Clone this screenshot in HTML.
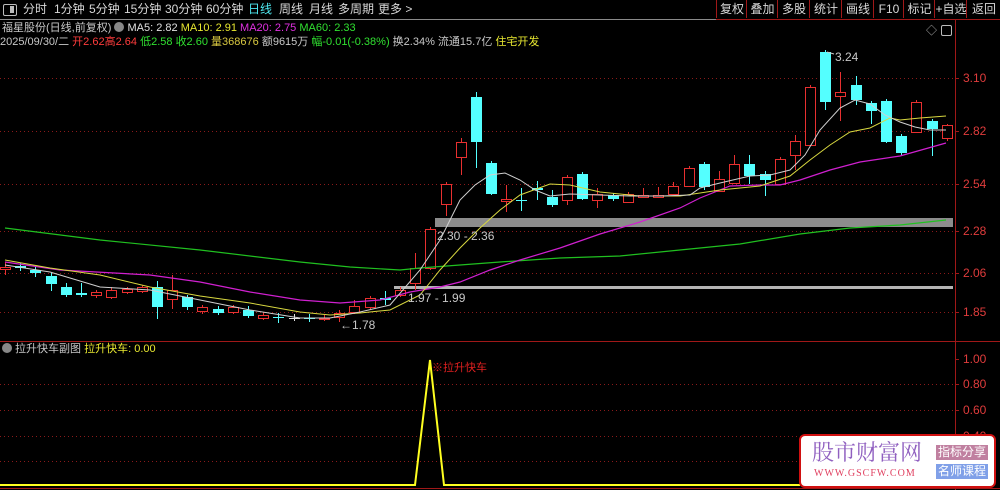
<!DOCTYPE html>
<html><head><meta charset="utf-8"><style>
html,body{margin:0;padding:0;background:#000;width:1000px;height:490px;overflow:hidden}
body{font-family:"Liberation Sans","Noto Sans CJK SC",sans-serif;font-size:12px;color:#c8c8c8;position:relative}
.a{position:absolute;white-space:nowrap;line-height:14px}
.s{font-size:11px}
.tb{position:absolute;top:0;height:19px;line-height:19px;font-size:12px}
.btn{position:absolute;top:0;height:18px;line-height:18px;border-left:1px solid #a01818;text-align:center;color:#d8d8d8;font-size:12px}
</style></head><body>
<svg width="1000" height="490" style="position:absolute;left:0;top:0" id="s">
<line x1="0" y1="19.5" x2="1000" y2="19.5" stroke="#8a8a8a"/>
<line x1="716" y1="19.5" x2="1000" y2="19.5" stroke="#a01818"/>
<line x1="955.5" y1="20" x2="955.5" y2="490" stroke="#a01818"/>
<line x1="0" y1="341.5" x2="1000" y2="341.5" stroke="#a01818"/>
<line x1="0" y1="488.5" x2="1000" y2="488.5" stroke="#a01818"/>
<g stroke="#8a1a1a" stroke-dasharray="1,3">
<line x1="0" y1="78.5" x2="955" y2="78.5"/><line x1="0" y1="131.5" x2="955" y2="131.5"/>
<line x1="0" y1="184.5" x2="955" y2="184.5"/><line x1="0" y1="231.5" x2="955" y2="231.5"/>
<line x1="0" y1="273.5" x2="955" y2="273.5"/><line x1="0" y1="312.5" x2="955" y2="312.5"/>
<line x1="0" y1="384.5" x2="955" y2="384.5"/><line x1="0" y1="410.5" x2="955" y2="410.5"/>
<line x1="0" y1="436.5" x2="955" y2="436.5"/><line x1="0" y1="461.5" x2="955" y2="461.5"/>
</g>
<g stroke="#a01818">
<line x1="955" y1="78.5" x2="959" y2="78.5"/><line x1="955" y1="131.5" x2="959" y2="131.5"/><line x1="955" y1="184.5" x2="959" y2="184.5"/><line x1="955" y1="231.5" x2="959" y2="231.5"/><line x1="955" y1="273.5" x2="959" y2="273.5"/><line x1="955" y1="312.5" x2="959" y2="312.5"/>
<line x1="955" y1="359.5" x2="959" y2="359.5"/><line x1="955" y1="384.5" x2="959" y2="384.5"/><line x1="955" y1="410.5" x2="959" y2="410.5"/><line x1="955" y1="436.5" x2="959" y2="436.5"/><line x1="955" y1="461.5" x2="959" y2="461.5"/>
</g>
<rect x="435" y="218" width="518" height="9" fill="#8c8c8c"/>
<rect x="394" y="286" width="559" height="3" fill="#b4b4b4"/>
<g id="c"></g>
<polyline fill="none" stroke="#20c020" stroke-width="1.2" points="5,228 100,240 200,250 300,262 350,267 400,270 420,268 460,265 500,262 560,258 620,256 680,250 740,244 800,234 850,228 900,225 946,220"/>
<polyline fill="none" stroke="#d020d0" stroke-width="1.2" points="5,262 60,270 150,275 200,282 250,292 300,300 340,303 380,300 410,292 440,287 460,282 490,270 520,260 560,248 600,234 640,222 680,208 700,198 730,186 760,185 780,185 800,180 830,170 860,162 900,156 946,143"/>
<polyline fill="none" stroke="#d8d840" stroke-width="1" points="5,260 50,268 100,275 150,287 200,296 250,303 300,312 330,315 360,313 390,310 420,295 440,270 460,248 480,228 500,210 520,195 550,184 570,185 600,192 640,196 680,196 720,190 760,186 790,176 810,160 830,145 850,132 870,128 890,118 900,120 920,118 946,116"/>
<polyline fill="none" stroke="#d0d0d0" stroke-width="1" points="5,265 50,272 100,287 150,290 200,300 250,310 300,318 330,318 360,312 390,305 420,270 440,240 460,200 475,185 490,175 505,173 520,180 535,190 550,196 570,194 600,195 630,196 660,196 690,195 700,188 720,183 750,176 770,175 790,170 805,155 820,130 840,108 855,100 870,104 885,115 900,122 915,127 930,130 946,130"/>
<polyline fill="none" stroke="#ffff20" stroke-width="2" points="0,485 415,485 430,360 444,485 800,485"/>
<path d="M827 52 L834 54" stroke="#ccc"/>
</svg>
<div class="tb" style="left:3px;top:4px;width:12px;height:10px;border:1px solid #bbb;border-radius:2px"></div>
<div class="tb" style="left:10px;top:6px;width:4px;height:7px;background:#bbb"></div>
<div class="tb" style="left:23px;color:#d8d8d8">分时</div>
<div class="tb" style="left:54px;color:#d8d8d8">1分钟</div>
<div class="tb" style="left:89px;color:#d8d8d8">5分钟</div>
<div class="tb" style="left:124px;color:#d8d8d8">15分钟</div>
<div class="tb" style="left:165px;color:#d8d8d8">30分钟</div>
<div class="tb" style="left:206px;color:#d8d8d8">60分钟</div>
<div class="tb" style="left:248px;color:#4ee8f0">日线</div>
<div class="tb" style="left:279px;color:#d8d8d8">周线</div>
<div class="tb" style="left:309px;color:#d8d8d8">月线</div>
<div class="tb" style="left:338px;color:#d8d8d8">多周期</div>
<div class="tb" style="left:378px;color:#d8d8d8">更多 &gt;</div>
<div class="btn" style="left:716px;width:30px">复权</div>
<div class="btn" style="left:746px;width:31px">叠加</div>
<div class="btn" style="left:777px;width:32px">多股</div>
<div class="btn" style="left:809px;width:32px">统计</div>
<div class="btn" style="left:841px;width:32px">画线</div>
<div class="btn" style="left:873px;width:30px">F10</div>
<div class="btn" style="left:903px;width:31px">标记</div>
<div class="btn" style="left:934px;width:32px">+自选</div>
<div class="btn" style="left:966px;width:34px">返回</div>
<div class="a s" style="left:2px;top:21px">福星股份(日线,前复权) <span style="display:inline-block;width:10px;height:10px;border-radius:5px;background:#888;vertical-align:-1px"></span> <span style="color:#e0e0e0">MA5: 2.82</span> <span style="color:#e8e830">MA10: 2.91</span> <span style="color:#e030e0">MA20: 2.75</span> <span style="color:#30e030">MA60: 2.33</span></div>
<div class="a s" style="left:0px;top:35px">2025/09/30/二 <span style="color:#ff3c3c">开2.62</span><span style="color:#ff3c3c">高2.64</span> <span style="color:#30e030">低2.58</span> <span style="color:#30e030">收2.60</span> <span style="color:#d8c840">量368676</span> 额9615万 <span style="color:#30e030">幅-0.01(-0.38%)</span> 换2.34% 流通15.7亿 <span style="color:#e8e830">住宅开发</span></div>
<div class="a" style="left:926px;top:24px;color:#aaa;font-size:11px">◇</div>
<div class="a" style="left:941px;top:25px;width:9px;height:9px;border:1px solid #bbb;border-radius:2px"></div>
<div class="a" style="left:963px;top:71px;color:#e03c3c">3.10</div>
<div class="a" style="left:963px;top:124px;color:#e03c3c">2.82</div>
<div class="a" style="left:963px;top:177px;color:#e03c3c">2.54</div>
<div class="a" style="left:963px;top:224px;color:#e03c3c">2.28</div>
<div class="a" style="left:963px;top:266px;color:#e03c3c">2.06</div>
<div class="a" style="left:963px;top:305px;color:#e03c3c">1.85</div>
<div class="a" style="left:963px;top:352px;color:#e03c3c">1.00</div>
<div class="a" style="left:963px;top:377px;color:#e03c3c">0.80</div>
<div class="a" style="left:963px;top:403px;color:#e03c3c">0.60</div>
<div class="a" style="left:963px;top:429px;color:#e03c3c">0.40</div>
<div class="a" style="left:835px;top:50px">3.24</div>
<div class="a" style="left:437px;top:229px">2.30 - 2.36</div>
<div class="a" style="left:408px;top:291px">1.97 - 1.99</div>
<div class="a" style="left:340px;top:318px">←1.78</div>
<div class="a s" style="left:2px;top:342px"><span style="display:inline-block;width:10px;height:10px;border-radius:5px;background:#888;vertical-align:-1px"></span> 拉升快车副图 <span style="color:#e8e830">拉升快车: 0.00</span></div>
<div class="a s" style="left:432px;top:361px;color:#e02020">※拉升快车</div>
<div class="a" style="left:799px;top:434px;width:193px;height:50px;background:#fff;border:2px solid #d01010;border-radius:6px"></div>
<div class="a" style="left:812px;top:440px;font-size:22px;line-height:24px;color:#9060c0;font-family:'Noto Serif CJK SC',serif">股市财富网</div>
<div class="a" style="left:814px;top:467px;font-size:10px;color:#e04060;font-family:'Liberation Serif',serif;letter-spacing:1px">WWW.GSCFW.COM</div>
<div class="a" style="left:936px;top:445px;width:52px;height:15px;background:#c080a0;color:#fff;font-size:12px;text-align:center">指标分享</div>
<div class="a" style="left:936px;top:464px;width:52px;height:15px;background:#80a0e8;color:#fff;font-size:12px;text-align:center">名师课程</div>
<script>
var d=[[267,269,262,275,'r'],[266,268,263,271,'c'],[270,273,266,277,'c'],[276,284,273,291,'c'],[287,295,283,297,'c'],[293,295,283,297,'c'],[292,295,290,298,'r'],[290,297,287,299,'r'],[289,292,287,294,'r'],[287,291,285,293,'r'],[287,307,281,319,'c'],[290,299,275,309,'r'],[297,307,295,310,'c'],[307,311,305,314,'r'],[309,313,306,315,'c'],[307,312,305,314,'r'],[310,316,306,318,'c'],[315,318,312,320,'r'],[317,318,313,323,'c'],[318,319,314,321,'w'],[318,319,314,322,'c'],[318,319,315,321,'r'],[313,317,310,322,'r'],[306,312,300,314,'r'],[298,307,296,309,'r'],[298,300,291,305,'c'],[290,295,287,297,'r'],[268,283,253,290,'r'],[229,268,227,270,'r'],[184,204,182,216,'r'],[142,157,138,175,'r'],[97,142,92,168,'c'],[163,194,161,195,'c'],[199,201,185,212,'r'],[200,201,188,211,'c'],[188,190,181,200,'c'],[197,205,190,207,'c'],[177,200,175,205,'r'],[174,199,172,200,'c'],[194,200,188,208,'r'],[195,199,193,201,'c'],[194,202,192,203,'r'],[195,197,188,198,'r'],[195,197,187,198,'r'],[186,194,182,195,'r'],[168,186,166,187,'r'],[164,187,162,190,'c'],[179,191,171,192,'r'],[164,183,155,184,'r'],[164,176,155,184,'c'],[174,180,171,196,'c'],[159,184,157,185,'r'],[141,155,135,170,'r'],[87,145,85,146,'r'],[52,102,50,110,'c'],[92,96,72,121,'r'],[85,100,76,105,'c'],[103,111,101,124,'c'],[101,142,99,143,'c'],[136,153,134,156,'c'],[102,132,100,133,'r'],[121,129,119,156,'c'],[125,138,124,141,'r']];
var h='';d.forEach(function(c,i){var x=Math.round(5+i*15.19)+.5;var col=c[4]=='r'?'#e83030':c[4]=='c'?'#54ffff':'#e0e0e0';
h+='<line x1="'+x+'" y1="'+c[2]+'" x2="'+x+'" y2="'+c[3]+'" stroke="'+col+'"/>';
var ht=Math.max(c[1]-c[0],1);
if(c[4]=='r'){h+='<rect x="'+(x-5)+'" y="'+(c[0]+.5)+'" width="10" height="'+ht+'" fill="#000" stroke="'+col+'"/>';}
else h+='<rect x="'+(x-5.5)+'" y="'+c[0]+'" width="11" height="'+ht+'" fill="'+col+'"/>';});
document.getElementById('c').innerHTML=h;
</script>
</body></html>
